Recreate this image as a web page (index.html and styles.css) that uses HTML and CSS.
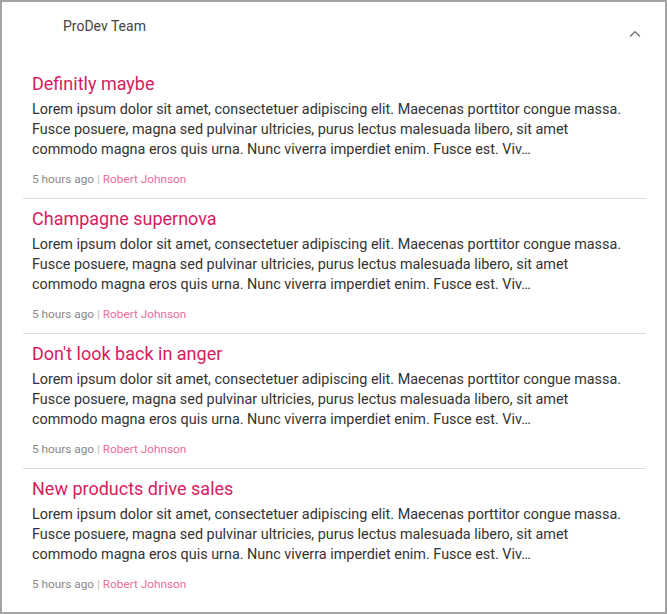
FILE: index.html
```html
<!DOCTYPE html>
<html>
<head>
<meta charset="utf-8">
<link rel="stylesheet" href="styles.css">
</head>
<body>
<div class="panel">
  <div class="header">
    <span class="team">ProDev Team</span>
    <svg class="chev" width="12" height="8" viewBox="0 0 12 8"><path d="M1 6.5 L6 1.8 L11 6.5" fill="none" stroke="#777" stroke-width="1.4"/></svg>
  </div>
  <ul class="list">
    <li class="item">
      <h3 class="title">Definitly maybe</h3>
      <p class="body">Lorem ipsum dolor sit amet, consectetuer adipiscing elit. Maecenas porttitor congue massa.<br>Fusce posuere, magna sed pulvinar ultricies, purus lectus malesuada libero, sit amet<br>commodo magna eros quis urna. Nunc viverra imperdiet enim. Fusce est. Viv…</p>
      <div class="meta">5 hours ago <span class="sep">|</span> <span class="author">Robert Johnson</span></div>
    </li>
    <li class="item">
      <h3 class="title">Champagne supernova</h3>
      <p class="body">Lorem ipsum dolor sit amet, consectetuer adipiscing elit. Maecenas porttitor congue massa.<br>Fusce posuere, magna sed pulvinar ultricies, purus lectus malesuada libero, sit amet<br>commodo magna eros quis urna. Nunc viverra imperdiet enim. Fusce est. Viv…</p>
      <div class="meta">5 hours ago <span class="sep">|</span> <span class="author">Robert Johnson</span></div>
    </li>
    <li class="item">
      <h3 class="title">Don't look back in anger</h3>
      <p class="body">Lorem ipsum dolor sit amet, consectetuer adipiscing elit. Maecenas porttitor congue massa.<br>Fusce posuere, magna sed pulvinar ultricies, purus lectus malesuada libero, sit amet<br>commodo magna eros quis urna. Nunc viverra imperdiet enim. Fusce est. Viv…</p>
      <div class="meta">5 hours ago <span class="sep">|</span> <span class="author">Robert Johnson</span></div>
    </li>
    <li class="item">
      <h3 class="title">New products drive sales</h3>
      <p class="body">Lorem ipsum dolor sit amet, consectetuer adipiscing elit. Maecenas porttitor congue massa.<br>Fusce posuere, magna sed pulvinar ultricies, purus lectus malesuada libero, sit amet<br>commodo magna eros quis urna. Nunc viverra imperdiet enim. Fusce est. Viv…</p>
      <div class="meta">5 hours ago <span class="sep">|</span> <span class="author">Robert Johnson</span></div>
    </li>
  </ul>
</div>
</body>
</html>
```
FILE: styles.css
```css
html, body {
  margin: 0;
  padding: 0;
  background: #fff;
}
.panel {
  box-sizing: border-box;
  width: 667px;
  height: 614px;
  border: 2px solid #a3a3a3;
  font-family: Roboto, "Liberation Sans", sans-serif;
  overflow: hidden;
}
.header {
  display: flex;
  justify-content: space-between;
  align-items: flex-start;
  padding: 15px 24px 0 61px;
  height: 55px;
  box-sizing: border-box;
}
.team {
  font-size: 14px;
  line-height: 18px;
  color: #444;
}
.chev {
  margin-top: 13px;
}
.list {
  list-style: none;
  margin: 0 19px 0 21px;
  padding: 0;
}
.item {
  padding: 15px 0 11px 9px;
  border-bottom: 1px solid #dcdcdc;
}
.item + .item {
  padding-top: 8px;
}
.item:last-child {
  border-bottom: none;
}
.title {
  margin: 0;
  font-size: 18px;
  line-height: 24px;
  font-weight: 400;
  color: #d81b60;
}
.body {
  margin: 4px 0 0;
  font-size: 14.4px;
  line-height: 20px;
  color: #333;
}
.meta {
  margin-top: 11px;
  font-size: 11.8px;
  line-height: 16px;
  color: #888;
}
.sep {
  color: #bbb;
}
.author {
  color: #ec6c9b;
}
```
